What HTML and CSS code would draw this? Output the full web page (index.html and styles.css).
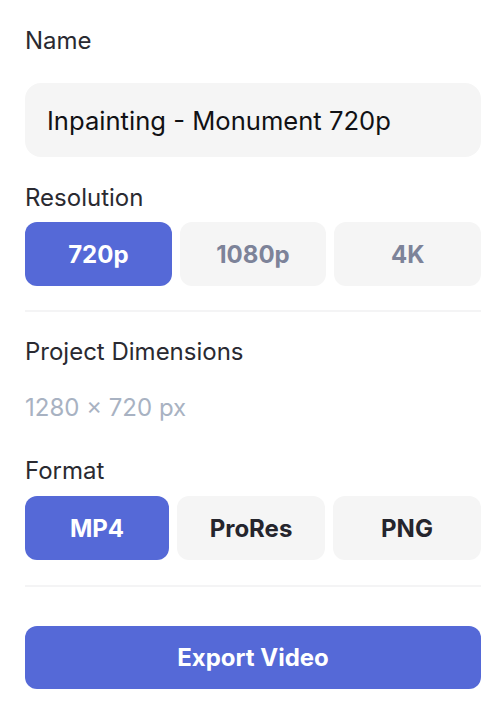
FILE: index.html
```html
<!DOCTYPE html>
<html lang="en">
<head>
<meta charset="utf-8">
<title>Export</title>
<link rel="stylesheet" href="styles.css">
</head>
<body>
<div class="panel">
  <div class="label">Name</div>
  <div class="input">Inpainting - Monument 720p</div>

  <div class="label label-res">Resolution</div>
  <div class="seg seg-res">
    <button class="opt active">720p</button>
    <button class="opt muted">1080p</button>
    <button class="opt muted">4K</button>
  </div>

  <div class="divider divider-1"></div>

  <div class="label label-dim">Project Dimensions</div>
  <div class="value">1280 × 720 px</div>

  <div class="label label-fmt">Format</div>
  <div class="seg seg-fmt">
    <button class="opt active">MP4</button>
    <button class="opt">ProRes</button>
    <button class="opt">PNG</button>
  </div>

  <div class="divider divider-2"></div>

  <button class="export">Export Video</button>
</div>
</body>
</html>
```

FILE: styles.css
```css
* { box-sizing: border-box; }
html, body { margin: 0; padding: 0; background: #ffffff; }
body { font-family: Inter, "Noto Sans", sans-serif; }

.panel {
  display: flex;
  flex-direction: column;
  padding: 27px 23px 0 25px;
}

.label {
  font-size: 24px;
  line-height: 28px;
  color: #2a2a31;
  font-weight: 400;
}

.input {
  margin-top: 28px;
  height: 74px;
  border-radius: 16px;
  background: #f5f5f5;
  display: flex;
  align-items: center;
  padding-left: 22px;
  font-size: 25.6px;
  color: #111114;
}

.label-res { margin-top: 27px; }

.seg {
  display: grid;
  gap: 8px;
}
.seg-res { margin-top: 10px; grid-template-columns: 1fr 1fr 1fr; }
.seg-fmt { margin-top: 11px; grid-template-columns: 144fr 148fr 148fr; }

.opt {
  height: 64px;
  border: 0;
  border-radius: 12px;
  background: #f5f5f5;
  font-family: inherit;
  font-size: 24px;
  font-weight: 700;
  color: #25252d;
  padding: 0;
}
.opt.active { background: #5569d7; color: #ffffff; }
.opt.muted { color: #7d8399; }

.divider { height: 2px; background: #f4f4f5; }
.divider-1 { margin-top: 24px; }
.divider-2 { margin-top: 25px; }

.label-dim { margin-top: 26px; }

.value {
  margin-top: 28px;
  font-size: 24px;
  line-height: 28px;
  color: #a8b2c2;
}

.label-fmt { margin-top: 35px; }

.export {
  margin-top: 39px;
  height: 63px;
  border: 0;
  border-radius: 12px;
  background: #5569d7;
  color: #ffffff;
  font-family: inherit;
  font-size: 24px;
  font-weight: 700;
}
```
